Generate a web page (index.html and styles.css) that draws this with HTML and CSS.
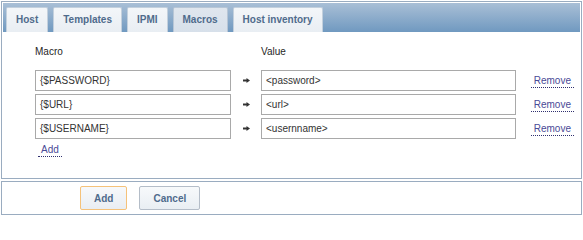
FILE: index.html
```html
<!DOCTYPE html>
<html>
<head>
<meta charset="utf-8">
<link rel="stylesheet" href="styles.css">
</head>
<body>
<div class="panel">
  <div class="tabbar">
    <span class="tab">Host</span>
    <span class="tab">Templates</span>
    <span class="tab">IPMI</span>
    <span class="tab active">Macros</span>
    <span class="tab">Host inventory</span>
  </div>
  <div class="content">
    <div class="macros">
      <div class="head">Macro</div>
      <div></div>
      <div class="head">Value</div>
      <div></div>

      <div class="input">{$PASSWORD}</div>
      <svg class="arrow" width="7" height="5" viewBox="0 0 7 5"><path d="M0 2.5H4" stroke="#333" stroke-width="2"/><path d="M3.5 0L7 2.5L3.5 5Z" fill="#333"/></svg>
      <div class="input">&lt;password&gt;</div>
      <a class="link">Remove</a>

      <div class="input">{$URL}</div>
      <svg class="arrow" width="7" height="5" viewBox="0 0 7 5"><path d="M0 2.5H4" stroke="#333" stroke-width="2"/><path d="M3.5 0L7 2.5L3.5 5Z" fill="#333"/></svg>
      <div class="input">&lt;url&gt;</div>
      <a class="link">Remove</a>

      <div class="input">{$USERNAME}</div>
      <svg class="arrow" width="7" height="5" viewBox="0 0 7 5"><path d="M0 2.5H4" stroke="#333" stroke-width="2"/><path d="M3.5 0L7 2.5L3.5 5Z" fill="#333"/></svg>
      <div class="input">&lt;usernname&gt;</div>
      <a class="link">Remove</a>
    </div>
    <a class="link add">Add</a>
  </div>
</div>
<div class="footer">
  <button class="btn focus">Add</button>
  <button class="btn">Cancel</button>
</div>
</body>
</html>
```

FILE: styles.css
```css
html, body { margin: 0; padding: 0; background: #fff; }
body {
  font-family: "Liberation Sans", Arial, sans-serif;
  font-size: 10px;
  color: #1f1f1f;
  padding: 1px 1px 0 1px;
  width: 581px;
}
.panel {
  border: 1px solid #9aacc0;
  padding: 1px;
}
.tabbar {
  height: 29px;
  background: linear-gradient(#a9bfd6, #7099c0);
  display: flex;
  align-items: flex-end;
  gap: 5px;
  padding-left: 3px;
}
.tab {
  height: 24px;
  line-height: 24px;
  padding: 0 9px;
  background: linear-gradient(#f3f6f9, #e9eef3);
  border: 1px solid #c3d0dd;
  border-bottom: none;
  border-radius: 2px 2px 0 0;
  color: #4f6b8c;
  font-weight: bold;
  font-size: 10px;
}
.tab.active {
  background: linear-gradient(#dfe6ee, #d7e0ea);
  border-color: #b7c6d6;
}
.content {
  height: 145px;
  padding-left: 32px;
  box-sizing: border-box;
  padding-top: 14px;
}
.macros {
  display: grid;
  grid-template-columns: 196px 30px 255px 58px;
  grid-auto-rows: 20px;
  row-gap: 4px;
  align-items: center;
}
.macros .head { height: 22px; line-height: 12px; align-self: start; }
.input {
  box-sizing: border-box;
  height: 21px;
  border: 1px solid #a9a9a9;
  padding: 0 4px;
  line-height: 19px;
  color: #333;
}
.arrow { justify-self: start; margin-left: 12px; }
.link {
  color: #4a4a96;
  text-decoration: none;
  border-bottom: 1px dotted #2f2f6f;
  line-height: 13px;
  padding: 0 3px;
  justify-self: end;
  margin-top: 2px;
}
.add {
  display: inline-block;
  margin-left: 3px;
  margin-top: 5px;
}
.footer {
  margin-top: 2px;
  border: 1px solid #9aacc0;
  height: 32px;
  display: flex;
  align-items: center;
  gap: 12px;
  padding-left: 78px;
}
.btn {
  height: 24px;
  font-family: "Liberation Sans", Arial, sans-serif;
  font-size: 10px;
  font-weight: bold;
  color: #4f6b8c;
  background: linear-gradient(#f7f9fb, #e9eef3);
  border: 1px solid #b4bdc8;
  border-radius: 2px;
  padding: 0 13px;
}
.btn.focus {
  border-color: #f5c27a;
}
```
